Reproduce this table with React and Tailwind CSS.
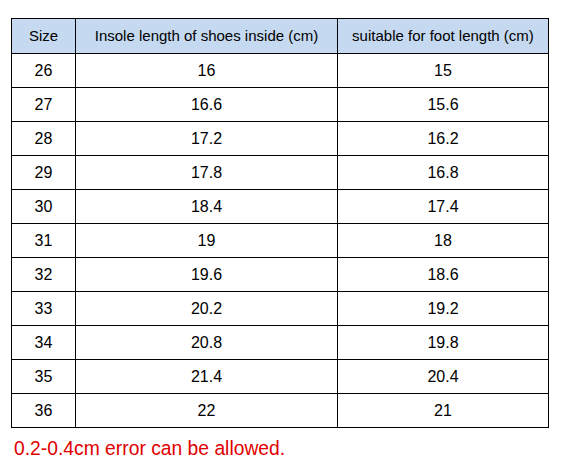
export default function App() {
    const rows = [
        [26, '16', '15'],
        [27, '16.6', '15.6'],
        [28, '17.2', '16.2'],
        [29, '17.8', '16.8'],
        [30, '18.4', '17.4'],
        [31, '19', '18'],
        [32, '19.6', '18.6'],
        [33, '20.2', '19.2'],
        [34, '20.8', '19.8'],
        [35, '21.4', '20.4'],
        [36, '22', '21'],
    ];

    return (
        <div className="w-[575px] h-[468px] bg-white pt-[18px] pl-[11px] font-['Liberation_Sans',Arial,sans-serif]">
            <table className="border-collapse table-fixed w-[537px] text-black">
                <colgroup>
                    <col className="w-[64px]" />
                    <col className="w-[262px]" />
                    <col className="w-[211px]" />
                </colgroup>
                <thead>
                    <tr className="h-[35px] bg-[#c5d9f1]">
                        <th className="border border-black font-normal text-[15px] text-center p-0">Size</th>
                        <th className="border border-black font-normal text-[15px] text-center p-0">Insole length of shoes inside (cm)</th>
                        <th className="border border-black font-normal text-[15px] text-center p-0">suitable for foot length (cm)</th>
                    </tr>
                </thead>
                <tbody>
                    {rows.map((r, idx) => (
                        <tr key={idx} className="h-[34px]">
                            <td className="border border-black text-[16px] text-center p-0">{r[0]}</td>
                            <td className="border border-black text-[16px] text-center p-0">{r[1]}</td>
                            <td className="border border-black text-[16px] text-center p-0">{r[2]}</td>
                        </tr>
                    ))}
                </tbody>
            </table>
            <p className="mt-[9px] pl-[3px] text-[19.3px] leading-[24px] text-[#e00000]">0.2-0.4cm error can be allowed.</p>
        </div>
    );
}
